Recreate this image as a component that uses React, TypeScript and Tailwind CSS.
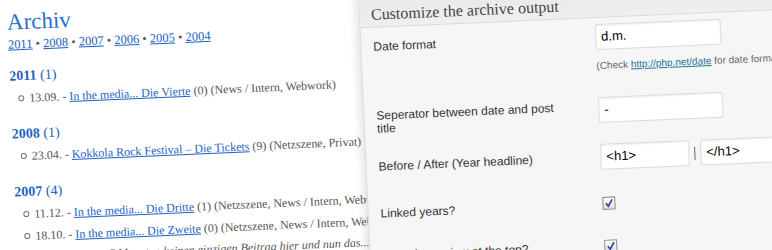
const YEARS = ['2011', '2008', '2007', '2006', '2005', '2004'];

type Post = { date: string; title: string; comments: number; cats: string; excerpt?: string };

const SECTIONS: { year: string; count: number; posts: Post[] }[] = [
  {
    year: '2011',
    count: 1,
    posts: [{ date: '13.09.', title: 'In the media... Die Vierte', comments: 0, cats: 'News / Intern, Webwork' }],
  },
  {
    year: '2008',
    count: 1,
    posts: [{ date: '23.04.', title: 'Kokkola Rock Festival – Die Tickets', comments: 9, cats: 'Netzszene, Privat' }],
  },
  {
    year: '2007',
    count: 4,
    posts: [
      { date: '11.12.', title: 'In the media... Die Dritte', comments: 1, cats: 'Netzszene, News / Intern, Webwork' },
      {
        date: '18.10.',
        title: 'In the media... Die Zweite',
        comments: 0,
        cats: 'Netzszene, News / Intern, Webwork',
        excerpt: 'Was? Seit 7 Monaten keinen einzigen Beitrag hier und nun das...',
      },
    ],
  },
];

function Check() {
  return (
    <span className="flex h-[13px] w-[13px] items-center justify-center border border-[#8c8c8c] bg-gradient-to-b from-white to-[#dedede]">
      <svg width="11" height="11" viewBox="0 0 11 11">
        <path d="M2.5 5.5 L4.8 8.5 L8.8 1.8" fill="none" stroke="#34499a" strokeWidth="1.7" />
      </svg>
    </span>
  );
}

function Field({ value, w }: { value: string; w: string }) {
  return (
    <div
      className={`${w} h-[26px] shrink-0 rounded-[3px] border border-[#dcdcdc] bg-white px-[5px] text-[13px] leading-[24px] text-black shadow-[inset_0_1px_2px_rgba(0,0,0,0.07)]`}
    >
      {value}
    </div>
  );
}

function Archive() {
  return (
    <div className="w-[358px] shrink-0 overflow-hidden whitespace-nowrap pl-[6px] font-['Liberation_Serif',serif] text-[#555]">
      <h1 className="pt-[10px] text-[23px] leading-[26px] text-[#2a6fcc]">Archiv</h1>
      <div className="text-[12.5px] leading-[18px]">
        {YEARS.map((y, i) => (
          <span key={y}>
            {i > 0 && <span className="text-[#555]"> • </span>}
            <a className="text-[#1d62c2] underline">{y}</a>
          </span>
        ))}
      </div>
      {SECTIONS.map((s, si) => (
        <div key={s.year} className={si === 0 ? 'mt-[12px]' : 'mt-[14px]'}>
          <div className="text-[14px] leading-[22px] text-[#1d62c2]">
            <span className="font-bold">{s.year}</span> ({s.count})
          </div>
          {s.posts.map((p) => (
            <div key={p.date}>
              <div className="pl-[8px] text-[12px] leading-[22px]">
                <span className="mr-[5px] inline-block h-[6px] w-[6px] rounded-full border border-[#777] align-[1px]" />
                {p.date} - <a className="text-[#1d62c2] underline">{p.title}</a> ({p.comments}) ({p.cats})
              </div>
              {p.excerpt && (
                <div className="pl-[42px] text-[12px] italic leading-[20px]">{p.excerpt}</div>
              )}
            </div>
          ))}
        </div>
      ))}
    </div>
  );
}

function Settings() {
  return (
    <div className="w-[440px] shrink-0 border-l border-[#dcdcdc] bg-[#f6f6f6] font-['Liberation_Sans',Arial,sans-serif] text-[12px] text-[#333] shadow-[-3px_0_8px_rgba(0,0,0,0.12)]">
      <div className="h-[44px] border-b border-[#d9d9d9] bg-gradient-to-b from-[#e6e6e6] to-[#efefef] pl-[11px] pt-[21px] font-['Liberation_Serif',serif] text-[16px] leading-[20px] text-[#464646]">
        Customize the archive output
      </div>
      <div className="pl-[12px]">
        <div className="flex h-[67px] items-start pt-[6px]">
          <div className="flex h-[26px] w-[222px] items-center leading-[16px]">Date format</div>
          <div>
            <Field value="d.m." w="w-[126px]" />
            <div className="mt-[9px] whitespace-nowrap text-[10px] leading-[14px] text-[#666]">
              (Check <a className="text-[#21759b] underline">http://php.net/date</a> for date formats)
            </div>
          </div>
        </div>
        <div className="flex h-[47px] items-start">
          <div className="mt-[15px] w-[222px] pr-[30px] leading-[13px]">Seperator between date and post title</div>
          <div className="mt-[12px]">
            <Field value="-" w="w-[125px]" />
          </div>
        </div>
        <div className="flex h-[50px] items-center">
          <div className="w-[222px] leading-[16px]">Before / After (Year headline)</div>
          <Field value="<h1>" w="w-[89px]" />
          <span className="mx-[5px] h-[13px] w-[1px] bg-[#666]" />
          <Field value="</h1>" w="w-[89px]" />
        </div>
        <div className="flex h-[43px] items-center">
          <div className="w-[222px] leading-[16px]">Linked years?</div>
          <Check />
        </div>
        <div className="flex h-[42px] items-center">
          <div className="w-[222px] leading-[16px]">Linked overview at the top?</div>
          <Check />
        </div>
        <div className="h-[40px]" />
      </div>
    </div>
  );
}

export default function App() {
  return (
    <div className="relative h-[250px] w-[772px] overflow-hidden bg-white">
      <div className="flex w-[820px] origin-top-left -rotate-[2.5deg]">
        <Archive />
        <Settings />
      </div>
    </div>
  );
}
